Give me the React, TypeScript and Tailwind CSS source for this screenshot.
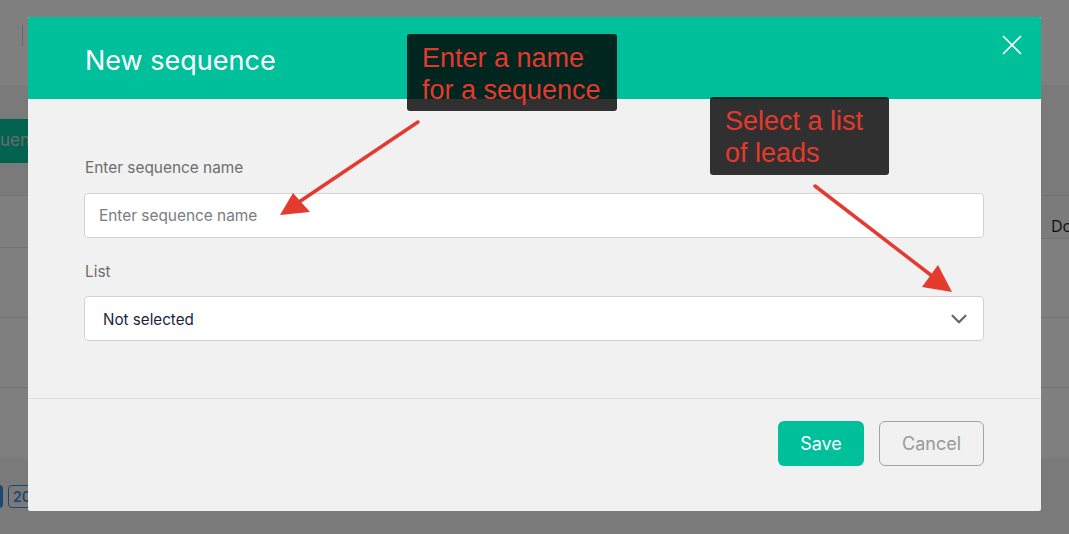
import { ChevronDown } from "lucide-react";

const ui = { fontFamily: "Inter, 'Noto Sans', sans-serif" };
const note = { fontFamily: "'Liberation Sans', Arial, sans-serif" };

function BackgroundPage() {
  return (
    <div className="flex flex-col h-[534px] w-[1069px] bg-[#f5f5f6]" style={ui}>
      {/* top bar */}
      <div className="h-[85px] bg-white flex items-start pt-[25px] pl-[22px]">
        <div className="w-px h-[21px] bg-[#d0d0d0]" />
      </div>
      <div className="flex items-center h-[110px] pt-[2px]">
        <div className="h-[44px] pr-4 flex items-center rounded-r bg-[#00c59e] text-[#d8d8d8] text-[17px]">
          uence
        </div>
      </div>
      {/* table */}
      <div className="flex bg-white">
        <div className="w-[40px] flex flex-col">
          <div className="h-[53px] border-y border-[#e3e3e3]" />
          <div className="h-[70px] border-b border-[#e3e3e3]" />
          <div className="h-[70px] border-b border-[#e3e3e3]" />
          <div className="h-[70px]" />
        </div>
        <div className="flex-1" />
        <div className="w-[40px] flex flex-col">
          <div
            className="h-[44px] border-y border-[#e3e3e3] bg-[#f7f7f7] flex items-center pl-[22px] text-[16px] text-[#1c1c1c] pt-[17px]"
            style={{ fontFamily: "'Open Sans', sans-serif" }}
          >
            Do
          </div>
          <div className="h-[79px] border-b border-[#e3e3e3]" />
          <div className="h-[70px] border-b border-[#e3e3e3]" />
          <div className="h-[70px]" />
        </div>
      </div>
      {/* pagination */}
      <div className="flex items-center gap-[5px] ml-[-20px] mt-[27px]">
        <div className="w-[23px] h-[23px] rounded bg-[#3b8fd9]" />
        <div className="h-[23px] px-[4px] rounded border border-[#3b8fd9] text-[#3b8fd9] text-[14px] leading-[21px] font-semibold">
          20
        </div>
      </div>
    </div>
  );
}

function Callout({ lines, className }: { lines: string[]; className: string }) {
  return (
    <div
      className={`absolute rounded-[3px] bg-black/80 text-[#e5392e] text-[27px] leading-[32px] pl-[15px] pt-[8px] ${className}`}
      style={note}
    >
      {lines.map((l) => (
        <div key={l}>{l}</div>
      ))}
    </div>
  );
}

export default function App() {
  return (
    <div className="relative w-[1069px] h-[534px] overflow-hidden">
      <BackgroundPage />
      <div className="absolute inset-0 bg-black/50" />

      {/* modal */}
      <div
        className="absolute left-[28px] top-[17px] w-[1013px] h-[494px] flex flex-col bg-[#f1f1f1] rounded-[2px] overflow-hidden"
        style={ui}
      >
        <div className="h-[82px] shrink-0 bg-[#00bf9b] flex items-center justify-between pl-[57px] pr-[19px]">
          <h2 className="text-white text-[27px] pt-[7px]">New sequence</h2>
          <svg className="self-start mt-[18px]" width="20" height="20" viewBox="0 0 20 20">
            <path d="M1 1 L19 19 M19 1 L1 19" stroke="white" strokeWidth="1.6" />
          </svg>
        </div>

        <div className="flex flex-col pl-[56px] pr-[57px] pt-[59px] pb-[57px] border-b border-[#dcdce2]">
          <label className="text-[15.4px] leading-[20px] text-[#6e6e6e] pl-px">Enter sequence name</label>
          <div className="mt-[15px] h-[45px] bg-white border border-[#d2d2d2] rounded-[4px] flex items-center pl-[14px] text-[15.4px] text-[#7a7c80]">
            Enter sequence name
          </div>
          <label className="mt-[24px] text-[15.4px] leading-[20px] text-[#6e6e6e] pl-px">List</label>
          <div className="mt-[14px] h-[45px] bg-white border border-[#d2d2d2] rounded-[4px] flex items-center justify-between pl-[18px] pr-[11px] text-[15.2px] text-[#1b1f3b]">
            <span className="pt-[3px]">Not selected</span>
            <ChevronDown className="text-[#5f6570] mt-[1px]" size={26} strokeWidth={2} />
          </div>
        </div>

        <div className="flex justify-end gap-[15px] pt-[22px] pr-[57px]">
          <button className="w-[86px] h-[45px] rounded-[6px] bg-[#00bf9b] text-white text-[18px]">Save</button>
          <button className="w-[105px] h-[45px] rounded-[6px] border border-[#a3a3a3] text-[#9a9a9a] text-[18px]">
            Cancel
          </button>
        </div>
      </div>

      <Callout lines={["Enter a name", "for a sequence"]} className="left-[407px] top-[34px] w-[210px] h-[77px]" />
      <Callout lines={["Select a list", "of leads"]} className="left-[710px] top-[97px] w-[179px] h-[78px]" />

      <svg className="absolute inset-0 pointer-events-none" width="1069" height="534">
        <line x1="418" y1="122" x2="296" y2="204" stroke="#e53b2f" strokeWidth="3.5" strokeLinecap="round" />
        <polygon points="280,215 293,193 310,212" fill="#e53b2f" />
        <line x1="815" y1="186" x2="936" y2="279" stroke="#e53b2f" strokeWidth="3.5" strokeLinecap="round" />
        <polygon points="952,292 938,265 922,287" fill="#e53b2f" />
      </svg>
    </div>
  );
}
